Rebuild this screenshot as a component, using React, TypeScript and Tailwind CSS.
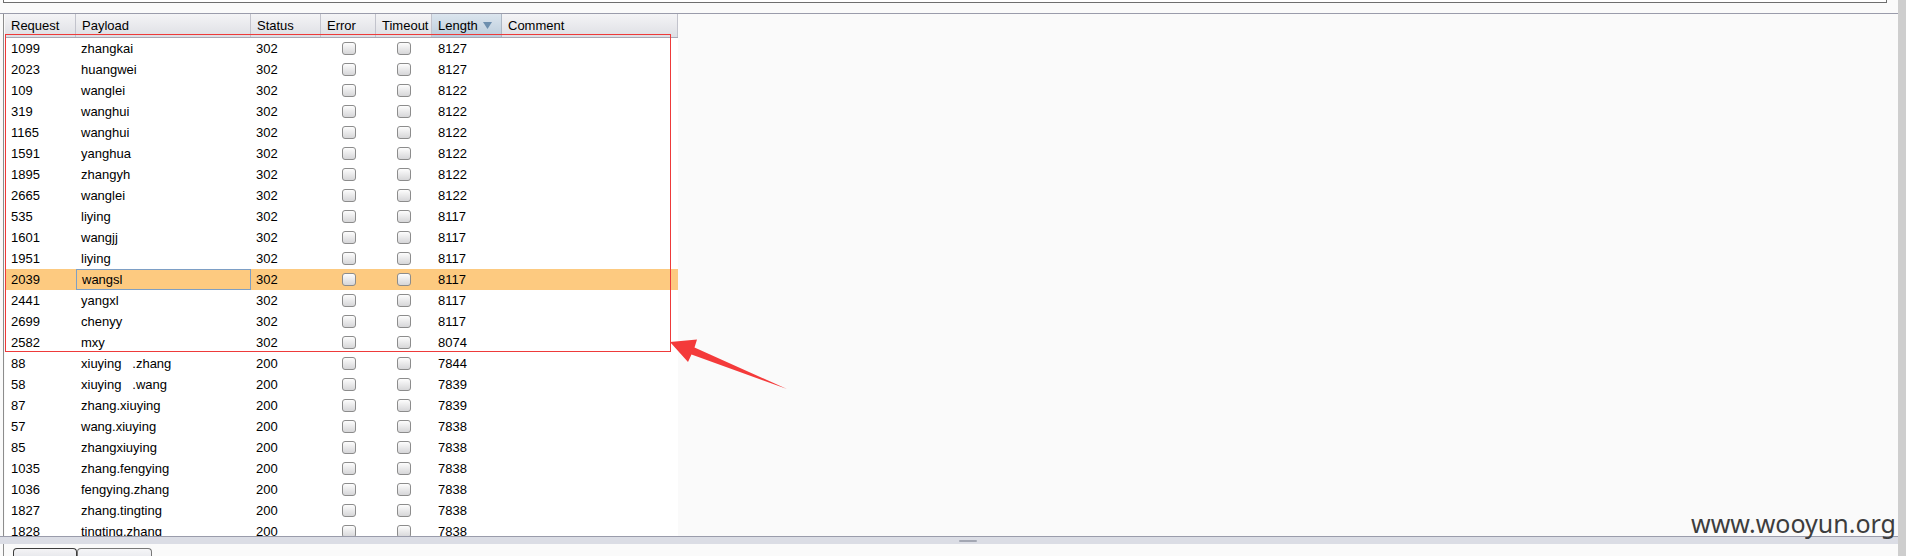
const columns = [
  { label: "Request", width: "w-[71px]" },
  { label: "Payload", width: "w-[175px]" },
  { label: "Status", width: "w-[70px]" },
  { label: "Error", width: "w-[55px]" },
  { label: "Timeout", width: "w-[56px]" },
  { label: "Length", width: "w-[70px]" },
  { label: "Comment", width: "w-[176px]" },
];

type Row = [number, string, number, number];

const rows: Row[] = [
  [1099, "zhangkai", 302, 8127],
  [2023, "huangwei", 302, 8127],
  [109, "wanglei", 302, 8122],
  [319, "wanghui", 302, 8122],
  [1165, "wanghui", 302, 8122],
  [1591, "yanghua", 302, 8122],
  [1895, "zhangyh", 302, 8122],
  [2665, "wanglei", 302, 8122],
  [535, "liying", 302, 8117],
  [1601, "wangjj", 302, 8117],
  [1951, "liying", 302, 8117],
  [2039, "wangsl", 302, 8117],
  [2441, "yangxl", 302, 8117],
  [2699, "chenyy", 302, 8117],
  [2582, "mxy", 302, 8074],
  [88, "xiuying   .zhang", 200, 7844],
  [58, "xiuying   .wang", 200, 7839],
  [87, "zhang.xiuying", 200, 7839],
  [57, "wang.xiuying", 200, 7838],
  [85, "zhangxiuying", 200, 7838],
  [1035, "zhang.fengying", 200, 7838],
  [1036, "fengying.zhang", 200, 7838],
  [1827, "zhang.tingting", 200, 7838],
  [1828, "tingting.zhang", 200, 7838],
];

const SELECTED = 2039;

function Checkbox() {
  return (
    <span className="block h-[13px] w-[14px] rounded-[3px] border border-[#8c8c8c] bg-linear-to-b from-[#fdfdfd] to-[#d6d6d8]" />
  );
}

function App() {
  return (
    <div className="relative flex h-[556px] w-[1906px] overflow-hidden bg-[#fafafa] font-['Liberation_Sans',Arial,sans-serif] text-[13px] text-black">
      <div className="flex w-[1898px] flex-col">
        {/* request editor edge */}
        <div className="h-[13px] pl-[3px]">
          <div className="h-[3px] w-[1884px] border-r border-b border-l border-[#6e6e6e] bg-white" />
        </div>

        {/* results viewport */}
        <div className="h-[524px] border-t border-b border-[#9a9cab]">
          <div className="ml-[3px] h-full overflow-hidden border-l border-[#8c8c8c] pl-[1px]">
            <div className="w-[673px] bg-white">
              <div className="flex h-[24px] border-b border-[#a8a9b4]">
                {columns.map((col) =>
                  col.label === "Length" ? (
                    <div
                      key={col.label}
                      className={`${col.width} flex items-center justify-between border-r border-[#aeb8c4] bg-linear-to-b from-[#dbe5ee] to-[#bccddc] pr-[9px] pl-[6px]`}
                    >
                      <span>{col.label}</span>
                      <svg width="9" height="7" viewBox="0 0 9 7">
                        <path d="M0 0H9L4.5 7Z" fill="#6d8fae" />
                      </svg>
                    </div>
                  ) : (
                    <div
                      key={col.label}
                      className={`${col.width} flex items-center border-r border-[#c2c3cc] bg-linear-to-b from-[#f4f4f6] to-[#dedfe4] pl-[6px]`}
                    >
                      {col.label}
                    </div>
                  )
                )}
              </div>

              {rows.map(([req, payload, status, length]) => {
                const selected = req === SELECTED;
                return (
                  <div
                    key={req}
                    className={`flex h-[21px] items-center ${selected ? "bg-[#fdca80]" : "bg-white"}`}
                  >
                    <div className="w-[71px] pl-[6px]">{req}</div>
                    <div
                      className={`flex h-full w-[175px] items-center pl-[5px] whitespace-pre ${selected ? "border border-[#7e9fc4] pl-[4px]" : ""}`}
                    >
                      {payload}
                    </div>
                    <div className="w-[70px] pl-[5px]">{status}</div>
                    <div className="flex w-[55px] justify-center">
                      <Checkbox />
                    </div>
                    <div className="flex w-[56px] justify-center">
                      <Checkbox />
                    </div>
                    <div className="w-[70px] pl-[6px]">{length}</div>
                    <div className="w-[176px]" />
                  </div>
                );
              })}
            </div>
          </div>
        </div>

        {/* splitter */}
        <div className="flex h-[7px] justify-center bg-[#dbdde5]">
          <div className="mt-[3px] ml-[38px] h-[2px] w-[18px] rounded-full bg-[#a3a7b3]" />
        </div>

        {/* bottom tabs */}
        <div className="ml-[3px] flex h-[12px] border-l border-[#8c8c8c] pt-[4px] pl-[9px]">
          <div className="h-[12px] w-[64px] rounded-t-[4px] border border-b-0 border-[#3c3c3c] bg-linear-to-b from-[#f4f4f6] to-[#e2e3e8]" />
          <div className="h-[12px] w-[75px] rounded-t-[4px] border border-b-0 border-[#777777] bg-linear-to-b from-[#f6f6f8] to-[#e6e7ec]" />
        </div>
      </div>

      {/* scrollbar strip */}
      <div className="w-[8px] bg-[#cecece]" />

      {/* annotation box */}
      <div className="absolute top-[34px] left-[5px] h-[318px] w-[666px] border border-[#ee3a3a]" />

      {/* annotation arrow */}
      <svg
        className="absolute top-[330px] left-[660px]"
        width="140"
        height="70"
        viewBox="660 330 140 70"
      >
        <polygon
          points="670,342 697,339.5 694.5,347.5 787,389 691.5,354.5 688,362"
          fill="#f43a3a"
        />
      </svg>

      {/* watermark */}
      <div className="absolute top-[511px] right-[10px] font-['Noto_Sans',sans-serif] text-[25px] leading-none text-[#3d3d3d]">
        www.wooyun.org
      </div>
    </div>
  );
}

export default App;
